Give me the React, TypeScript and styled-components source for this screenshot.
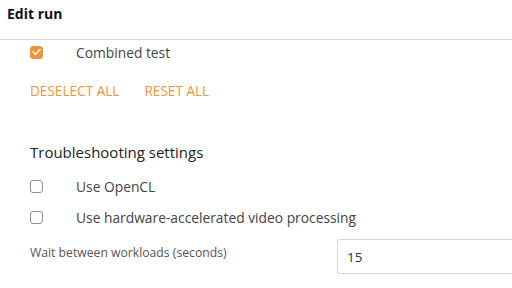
import React from "react";
import styled, { createGlobalStyle } from "styled-components";

const Global = createGlobalStyle`
  html, body { margin: 0; padding: 0; background: #fff; }
  body { font-family: "Open Sans", "Noto Sans", sans-serif; color: #444; }
`;

const Page = styled.div`
  width: 512px;
  height: 288px;
  overflow: hidden;
  display: flex;
  flex-direction: column;
`;

const Header = styled.div`
  height: 40px;
  border-bottom: 1px solid #dcdcdc;
  padding: 4px 7px 0;
  box-sizing: border-box;
`;

const Title = styled.h1`
  margin: 0;
  font-size: 14px;
  line-height: 20px;
  font-weight: 700;
  color: #111;
`;

const Body = styled.div`
  padding: 0 0 0 30px;
  display: flex;
  flex-direction: column;
`;

const CheckList = styled.div`
  display: flex;
  flex-direction: column;
  gap: 7px;
`;

const CheckRow = styled.label`
  display: flex;
  align-items: center;
  height: 24px;
  font-size: 13.8px;
  color: #444;
`;

const Box = styled.span<{ $checked?: boolean }>`
  width: 13px;
  height: 13px;
  box-sizing: border-box;
  border-radius: 3px;
  border: 1px solid ${(p) => (p.$checked ? "#f0933a" : "#8f8f8f")};
  background: ${(p) => (p.$checked ? "#f0933a" : "#fff")};
  display: flex;
  align-items: center;
  justify-content: center;
  margin-right: 33px;
  flex-shrink: 0;
`;

const Actions = styled.div`
  display: flex;
  gap: 25px;
  margin-top: 17px;
`;

const LinkButton = styled.button`
  border: 0;
  background: none;
  padding: 0;
  font-family: inherit;
  font-size: 13.6px;
  line-height: 19px;
  color: #f0933a;
  text-transform: uppercase;
  cursor: pointer;
`;

const SectionTitle = styled.h2`
  margin: 42px 0 12px;
  font-size: 15px;
  line-height: 20px;
  font-weight: 400;
  color: #222;
`;

const FieldRow = styled.div`
  display: flex;
  align-items: flex-start;
  margin-top: 10px;
`;

const FieldLabel = styled.span`
  font-size: 12.2px;
  line-height: 16px;
  padding-top: 6px;
  color: #555;
  width: 307px;
  flex-shrink: 0;
`;

const Input = styled.div`
  flex: 1;
  height: 35px;
  border: 1px solid #d6d6d6;
  border-right: 0;
  border-radius: 3px 0 0 3px;
  box-sizing: border-box;
  display: flex;
  align-items: center;
  padding-left: 9px;
  font-size: 13.5px;
  color: #333;
`;

const Check = ({ checked }: { checked?: boolean }) => (
  <Box $checked={checked}>
    {checked && (
      <svg width="9" height="8" viewBox="0 0 9 8">
        <path d="M1.2 4.2 L3.5 6.3 L7.8 1.6" fill="none" stroke="#fff" strokeWidth="1.8" strokeLinecap="round" strokeLinejoin="round" />
      </svg>
    )}
  </Box>
);

export default function App() {
  return (
    <Page>
      <Global />
      <Header>
        <Title>Edit run</Title>
      </Header>
      <Body>
        <CheckRow>
          <Check checked />
          Combined test
        </CheckRow>
        <Actions>
          <LinkButton>Deselect all</LinkButton>
          <LinkButton>Reset all</LinkButton>
        </Actions>
        <SectionTitle>Troubleshooting settings</SectionTitle>
        <CheckList>
          <CheckRow>
            <Check />
            Use OpenCL
          </CheckRow>
          <CheckRow>
            <Check />
            Use hardware-accelerated video processing
          </CheckRow>
        </CheckList>
        <FieldRow>
          <FieldLabel>Wait between workloads (seconds)</FieldLabel>
          <Input>15</Input>
        </FieldRow>
      </Body>
    </Page>
  );
}
